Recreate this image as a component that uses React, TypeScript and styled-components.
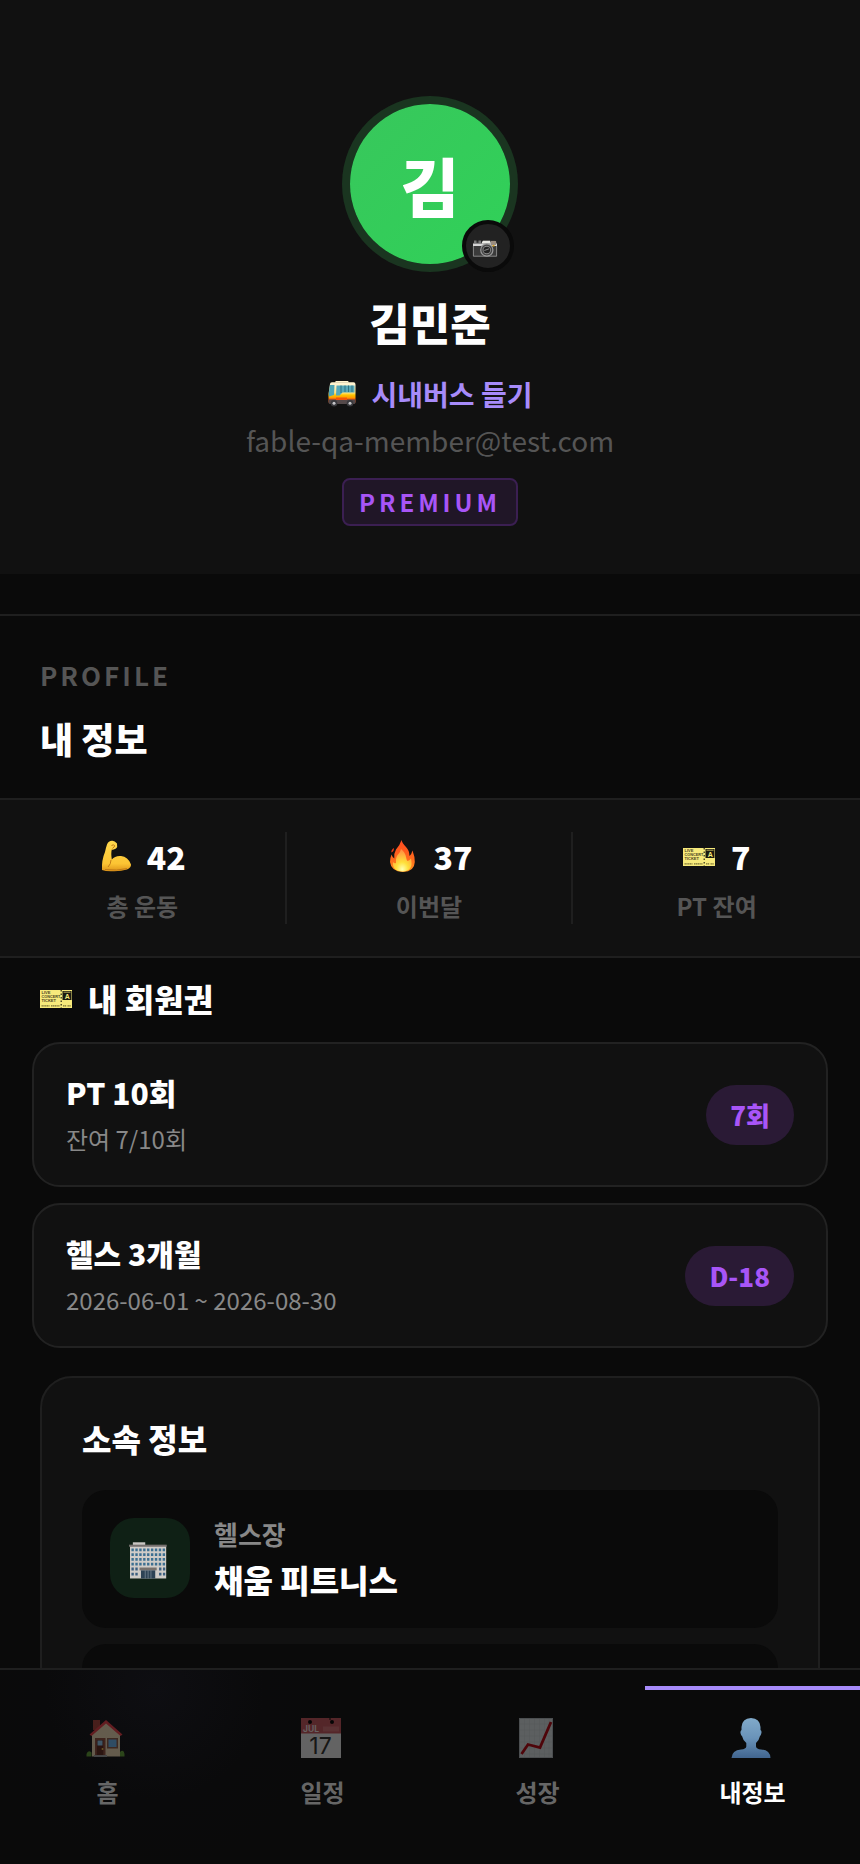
import React from 'react'
import styled, { createGlobalStyle } from 'styled-components'

const GlobalStyle = createGlobalStyle`
    *, *::before, *::after {
        box-sizing: border-box;
    }
    body {
        margin: 0;
        background: #0a0a0a;
        color: #fff;
        font-family: 'Noto Sans CJK KR', 'Noto Sans', sans-serif;
    }
    h1, h2, p, ul {
        margin: 0;
        padding: 0;
    }
    button {
        font-family: inherit;
        cursor: pointer;
    }
    svg {
        overflow: visible;
    }
`

const Screen = styled.div`
    display: flex;
    flex-direction: column;
    height: 100vh;
`

const Content = styled.main`
    flex: 1;
    min-height: 0;
    overflow-y: auto;
    scrollbar-width: none;
`

/* ---------- hero ---------- */

const Hero = styled.header`
    display: flex;
    flex-direction: column;
    align-items: center;
    padding: 104px 24px 48px;
    background: #111;
`

const Avatar = styled.div`
    position: relative;
    display: flex;
    align-items: center;
    justify-content: center;
    width: 160px;
    height: 160px;
    border-radius: 50%;
    background: linear-gradient(135deg, #38c75c, #30d158);
    box-shadow: 0 0 0 8px #1a3520;
    font-size: 64px;
    line-height: 92px;
    font-weight: 800;
`

const CameraButton = styled.button`
    position: absolute;
    right: -4px;
    bottom: -8px;
    display: flex;
    align-items: center;
    justify-content: center;
    width: 52px;
    height: 52px;
    padding: 0;
    border: 4px solid #0a0a0a;
    border-radius: 50%;
    background: #222;
`

const UserName = styled.h1`
    margin-top: 26px;
    font-size: 44px;
    line-height: 64px;
    font-weight: 800;
`

const UserTitle = styled.p`
    display: flex;
    align-items: center;
    gap: 16px;
    margin-top: 20px;
    color: #a78bfa;
    font-size: 28px;
    line-height: 40px;
    font-weight: 700;
`

const Email = styled.p`
    margin-top: 6px;
    color: #555;
    font-size: 28px;
    line-height: 40px;
`

const Plan = styled.span`
    margin-top: 18px;
    padding: 0 15px;
    border: 2px solid #3b1f52;
    border-radius: 8px;
    background: #201627;
    color: #a855f7;
    font-size: 24px;
    line-height: 44px;
    font-weight: 700;
    letter-spacing: 4px;
`

/* ---------- my info ---------- */

const PageHead = styled.div`
    margin-top: 40px;
    padding: 40px 40px 32px;
    border-top: 2px solid #1f1f1f;
`

const Eyebrow = styled.p`
    color: #555;
    font-size: 26px;
    line-height: 38px;
    font-weight: 700;
    letter-spacing: 3px;
`

const PageTitle = styled.h2`
    margin-top: 16px;
    font-size: 36px;
    line-height: 56px;
    font-weight: 800;
`

const Stats = styled.ul`
    display: grid;
    grid-template-columns: repeat(3, 1fr);
    padding: 32px 0;
    border: solid #1f1f1f;
    border-width: 2px 0;
    background: #111;
    list-style: none;
`

const Stat = styled.li`
    display: flex;
    flex-direction: column;
    align-items: center;
    gap: 8px;

    &:not(:last-child) {
        border-right: 2px solid #1f1f1f;
    }
`

const StatValue = styled.span`
    display: flex;
    align-items: center;
    gap: 16px;
    font-size: 32px;
    line-height: 48px;
    font-weight: 800;
`

const StatLabel = styled.span`
    color: #555;
    font-size: 24px;
    line-height: 36px;
    font-weight: 700;
`

/* ---------- memberships ---------- */

const SectionTitle = styled.h2`
    display: flex;
    align-items: center;
    gap: 16px;
    padding: 16px 40px 20px;
    font-size: 32px;
    line-height: 48px;
    font-weight: 800;
`

const Passes = styled.div`
    display: flex;
    flex-direction: column;
    gap: 16px;
    padding: 0 32px;
`

const PassCard = styled.article`
    display: flex;
    align-items: center;
    justify-content: space-between;
    padding: 28px 32px;
    border: 2px solid #222;
    border-radius: 28px;
    background: #111;
`

const PassText = styled.div`
    display: flex;
    flex-direction: column;
    gap: 9px;
`

const PassName = styled.strong`
    font-size: 30px;
    line-height: 40px;
    font-weight: 800;
`

const PassDetail = styled.span`
    color: #888;
    font-size: 24px;
    line-height: 36px;
`

const Pill = styled.span`
    padding: 12px 24px;
    border-radius: 30px;
    background: #2a1a35;
    color: #a855f7;
    font-size: 26px;
    line-height: 36px;
    font-weight: 800;
`

/* ---------- affiliation ---------- */

const GymCard = styled.section`
    display: flex;
    flex-direction: column;
    gap: 16px;
    margin: 28px 40px 40px;
    padding: 40px;
    border: 2px solid #1f1f1f;
    border-radius: 32px;
    background: #111;
`

const GymTitle = styled.h2`
    margin-bottom: 16px;
    font-size: 32px;
    line-height: 40px;
    font-weight: 800;
`

const GymRow = styled.div`
    display: flex;
    gap: 24px;
    padding: 28px;
    border-radius: 24px;
    background: #0a0a0a;
`

const GymIcon = styled.span`
    display: flex;
    align-items: center;
    justify-content: center;
    width: 80px;
    height: 80px;
    border-radius: 24px;
    background: #0f2015;
`

const GymText = styled.div`
    display: flex;
    flex-direction: column;
    gap: 8px;
`

const GymLabel = styled.span`
    color: #888;
    font-size: 26px;
    line-height: 32px;
    font-weight: 700;
`

const GymName = styled.strong`
    font-size: 32px;
    line-height: 42px;
    font-weight: 800;
`

/* ---------- bottom tabs ---------- */

const TabBar = styled.nav`
    display: grid;
    grid-template-columns: repeat(4, 1fr);
    padding: 16px 0 30px;
    border-top: 2px solid #1f1f1f;
    background: radial-gradient(circle at 18% 10%, #0e0e12 0, #0a0a0b 110px, #0a0a0a 180px);
`

const Tab = styled.button<{ $active: boolean }>`
    display: flex;
    flex-direction: column;
    align-items: center;
    gap: 16px;
    padding: 28px 0 24px;
    border: 0;
    border-top: 4px solid ${({ $active }) => ($active ? '#a78bfa' : 'transparent')};
    background: none;
    color: ${({ $active }) => ($active ? '#fff' : '#666')};
    font-size: 24px;
    line-height: 36px;
    font-weight: 700;

    svg {
        margin-right: 3px;
        opacity: ${({ $active }) => ($active ? 1 : 0.4)};
    }
`

/* ---------- drawings ---------- */

const CameraIcon = () => (
    <svg width="30" height="30" viewBox="2 -3 30 30" aria-hidden="true">
        <path d="M2 10 L3 7.5 H10 L11 8 L12 6.500 H24 L26 8 V22.500 H2 Z" fill="#3b3b3b" />
        <path d="M2 9.500 H26 V12 H2 Z" fill="#d5d5d5" />
        <path d="M11 8 L12 6.800 H19 L20 9.500 H11 Z" fill="#e9e9e4" />
        <rect x="3" y="6.500" width="2.500" height="2.500" fill="#777" />
        <rect x="7.500" y="6.500" width="2.500" height="2.500" fill="#777" />
        <rect x="20" y="7" width="5" height="4" fill="#9a8d80" />
        <path d="M2.400 12 V22.200 H25.600 V12" fill="none" stroke="#999" strokeWidth="0.8" />
        <circle cx="15.800" cy="16" r="6.700" fill="#999" />
        <circle cx="15.800" cy="16" r="5.500" fill="#444" />
        <circle cx="15.800" cy="16" r="4.200" fill="#8a8a8a" />
        <circle cx="15.800" cy="16" r="3.300" fill="#222" />
        <path d="M13.300 16.500 L18 14.800" stroke="#888" strokeWidth="1" />
        <rect x="21.500" y="11" width="2" height="1.500" fill="#d9a520" />
    </svg>
)

const BusIcon = () => (
    <svg width="28" height="28" viewBox="0 0 28 28" aria-hidden="true">
        <defs>
            <linearGradient id="bus" x1="0" y1="0" x2="0" y2="1">
                <stop offset="0.15" stopColor="#fff3cf" />
                <stop offset="0.5" stopColor="#ffe27a" />
                <stop offset="0.6" stopColor="#ffc400" />
                <stop offset="0.72" stopColor="#ff9d00" />
                <stop offset="0.8" stopColor="#f0560a" />
            </linearGradient>
        </defs>
        <path d="M7 2 L8 1 H20 L21 2.500 H7 Z" fill="#fff3cf" />
        <path d="M2 4 Q2 2.300 4 2.300 H25.500 Q27.500 2.300 27.500 4.500 V21.500 Q27.500 23.500 26 23.500 H2 Q0.500 23.500 0.500 21.500 V14 Z" fill="url(#bus)" />
        <path d="M2 5 H6.500 L6 15 L0.800 16.500 V13 Z" fill="#4fa6b5" />
        <path d="M8.500 5.500 H26.500 V12.500 H14.500 L11.500 15.500 H8 Z" fill="#57a8b8" />
        <path d="M13 5.500 V13 M17 5.500 V12 M20.500 5.500 V12 M24 5.500 V12" stroke="#2c7180" strokeWidth="1" />
        <path d="M0.500 19.500 H27.500 V22 Q27.500 24 26 24 H2 Q0.500 24 0.500 22 Z" fill="#54494a" />
        <path d="M8 17.500 H19 V20 H8 Z" fill="#f0560a" />
        <circle cx="6" cy="23.200" r="3.300" fill="#39393d" />
        <circle cx="6" cy="23.200" r="1.500" fill="#c6c6c9" />
        <circle cx="22" cy="23.200" r="3.300" fill="#39393d" />
        <circle cx="22" cy="23.200" r="1.500" fill="#c6c6c9" />
    </svg>
)

const ArmIcon = () => (
    <svg width="32" height="32" viewBox="0 0 32 32" aria-hidden="true">
        <defs>
            <linearGradient id="arm" x1="0" y1="0" x2="0" y2="1">
                <stop offset="0" stopColor="#ffd94d" />
                <stop offset="0.75" stopColor="#fcc433" />
                <stop offset="1" stopColor="#dd9318" />
            </linearGradient>
        </defs>
        <path
            d="M8 4.500 Q9.500 0.800 13 0.800 Q15.500 0.500 18 3.500 Q18.800 7 17 8.600 Q14.500 10.200 12.800 9.500 Q11.800 13 12.800 19.500 Q16 15.500 22 16 Q29 16.500 32 24.500 Q32.300 27.500 28 29.500 Q22 31.500 14 31.300 Q7 31.600 3 30 Q2.500 20 6 12 Q6.800 8 8 4.500 Z"
            fill="url(#arm)"
        />
        <path d="M12 20 Q12 24 9 27 M12.500 5.500 Q15 3.800 15.800 6 L13.500 8.500 M6 29.500 Q18 31 28 28.600" fill="none" stroke="#c17b17" strokeWidth="1" />
    </svg>
)

const FireIcon = () => (
    <svg width="32" height="32" viewBox="0 0 32 32" aria-hidden="true">
        <defs>
            <linearGradient id="fire" x1="0" y1="0" x2="0" y2="1">
                <stop offset="0" stopColor="#ff4a20" />
                <stop offset="0.6" stopColor="#ff6a1c" />
                <stop offset="1" stopColor="#ff9320" />
            </linearGradient>
            <radialGradient id="flame" cx="0.5" cy="0.9" r="0.8">
                <stop offset="0" stopColor="#ffffb0" />
                <stop offset="0.4" stopColor="#ffe03a" />
                <stop offset="1" stopColor="#ff9640" />
            </radialGradient>
        </defs>
        <path
            d="M15.500 0 Q16 3 20 7 Q23.500 10.500 23.500 16 Q25.500 14.500 26.500 10.500 Q29 17 28.800 22 Q28.500 31.500 17 32 Q5 31.500 4 22 Q4 18 5.500 14.500 Q6.500 17.500 8.300 18.500 Q7.500 14 10 9.500 Q14 5 15.500 0 Z"
            fill="url(#fire)"
        />
        <path
            d="M15 9 Q19 12 20 17 Q20.500 20 21.500 21 Q23.500 20.500 25 18.500 Q28 31 16.500 31.500 Q6 31 7 22 Q8.500 24 10 23 Q9.500 17 12 14.500 Q14.500 12 15 9 Z"
            fill="url(#flame)"
        />
        <path d="M8 8 Q4.800 10 5.500 12.500 Q8 11.500 8 8 Z" fill="#ed3c18" />
    </svg>
)

const TicketIcon = () => (
    <svg width="32" height="32" viewBox="0 0 32 32" aria-hidden="true">
        <rect y="8" width="32" height="18" fill="#f7ea7b" />
        <rect x="22.500" y="9" width="9" height="9" fill="#1b1a10" />
        <path d="M21.200 8 V26" stroke="#2a2814" strokeWidth="1.200" strokeDasharray="1.500 2" />
        <g fill="#4a4622" fontFamily="Liberation Sans, sans-serif" fontWeight="700" fontSize="4">
            <text x="1.500" y="12">LIVE</text>
            <text x="1.500" y="16" fontSize="3.800">CONCERT</text>
            <text x="1.500" y="20.300">TICKET</text>
            <text x="24.800" y="17.300" fill="#f7ea7b" fontSize="7">A</text>
        </g>
        <path d="M23.500 10.200 H30.500" stroke="#b5ab59" strokeWidth="1" />
        <path d="M1.500 23.800 H9.500 M11 23.800 H19.500 M23 23.800 H26.500 M27.500 23.800 H31" stroke="#777032" strokeWidth="1.200" strokeDasharray="1.400 0.400" />
    </svg>
)

const OfficeIcon = () => (
    <svg width="40" height="40" viewBox="2 -2 42 42" aria-hidden="true">
        <rect x="5" y="2.500" width="13" height="3" fill="#c9c6c3" />
        <rect x="2" y="5.500" width="38" height="35" fill="#cfccc8" />
        <rect x="1" y="5" width="39.500" height="2.200" fill="#75706e" />
        {[9, 14, 19, 24].map(y => (
            <path key={y} d={`M3.500 ${y + 1.500} H39`} stroke="#3c6f91" strokeWidth="3" strokeDasharray="2.500 1.600" />
        ))}
        {[29, 34.500].map(y => (
            <path key={y} d={`M3.500 ${y + 1.500} H10.500 M32.500 ${y + 1.500} H39`} stroke="#3c5f80" strokeWidth="3" strokeDasharray="2.500 1.600" />
        ))}
        <rect x="12" y="29" width="18" height="3" fill="#77716d" />
        <rect x="13.500" y="32" width="15" height="8.500" fill="#2d4355" />
        <path d="M18 32 V40.500 M21 32 V40.500 M24 32 V40.500" stroke="#8796a0" strokeWidth="0.7" />
    </svg>
)

const HomeIcon = () => (
    <svg width="40" height="40" viewBox="0 0 40 40" aria-hidden="true">
        <rect x="7" y="2" width="7" height="10" fill="#a33c32" />
        <path d="M6 17 L20 4 L34 17 V38.500 H6 Z" fill="#e9d3ad" />
        <path d="M3.500 16.500 L20 2 L36.500 16.500 L34.500 18 L20 5.500 L5.500 18 Z" fill="#e5383e" />
        <rect x="9" y="20" width="10.500" height="18.500" fill="#8c4a37" />
        <rect x="10.800" y="22" width="6.500" height="15" fill="#5a2216" />
        <rect x="11.500" y="22.500" width="5" height="5" fill="#8cc4ea" />
        <circle cx="16.500" cy="31" r="1" fill="#f3c548" />
        <rect x="21" y="20" width="11" height="10.500" fill="#875641" />
        <rect x="22.500" y="21.500" width="8" height="7.500" fill="#65aee6" />
        <rect x="8" y="37" width="13" height="2" fill="#999" />
        <path d="M0.500 38.500 V36 Q2 31.500 5.500 34.500 V38.500 Z M34 38.500 V34 Q37.500 30.500 38.500 36 V38.500 Z" fill="#5c9a2e" />
    </svg>
)

const CalendarIcon = () => (
    <svg width="40" height="40" viewBox="0 0 40 40" aria-hidden="true">
        <rect width="40" height="40" fill="#e9e9e9" />
        <rect width="40" height="15.500" fill="#c45258" />
        <circle cx="9" cy="4" r="2" fill="#000" />
        <circle cx="31" cy="4" r="2" fill="#000" />
        <path d="M29 0 V2" stroke="#000" />
        <path d="M22.500 11 H38" stroke="#e0858a" strokeWidth="5" strokeDasharray="1 1" />
        <text x="2" y="14" fill="#f4e8e8" fontFamily="Inter, sans-serif" fontSize="8.500" fontWeight="600">JUL</text>
        <text x="19.500" y="36" fill="#2c2c2c" fontFamily="Inter, sans-serif" fontSize="23" fontWeight="400" textAnchor="middle">17</text>
    </svg>
)

const ChartIcon = () => (
    <svg width="40" height="40" viewBox="0 0 40 40" aria-hidden="true">
        <rect x="3.500" y="0.500" width="33" height="39" fill="#d8dee2" stroke="#aeb4b8" />
        <path
            d="M8.500 1 V39 M13.500 1 V39 M18.500 1 V39 M23.500 1 V39 M28.500 1 V39 M33 1 V39 M4 6 H36 M4 12 H36 M4 18 H36 M4 24 H36 M4 30 H36 M4 36 H36"
            stroke="#c6ccd1"
            strokeWidth="0.6"
        />
        <path d="M5.500 36 L12 26.500 L24 29.500 L35 4" fill="none" stroke="#b5000c" strokeWidth="2.800" />
    </svg>
)

const PersonIcon = () => (
    <svg width="40" height="40" viewBox="0 0 40 40" aria-hidden="true">
        <defs>
            <linearGradient id="person" x1="0" y1="0" x2="0" y2="1">
                <stop offset="0" stopColor="#81aaca" />
                <stop offset="0.5" stopColor="#6a93b9" />
                <stop offset="1" stopColor="#41658f" />
            </linearGradient>
        </defs>
        <path
            d="M20 0 Q29 0.500 29.500 9 V12 Q31 13 30.300 15.500 Q29.800 17.500 29 18 Q28 22.500 25 25 V28.500 Q25.500 31 30 31.500 Q39 32 39.500 40 H0.500 Q1 32 10 31.500 Q15 31 15.300 28.500 V25 Q12 22.500 11 18 Q10 17.500 9.600 15.500 Q9 13 10.500 12 V9 Q11 0.500 20 0 Z"
            fill="url(#person)"
        />
    </svg>
)

const stats = [
    { icon: <ArmIcon />, value: '42', label: '총 운동' },
    { icon: <FireIcon />, value: '37', label: '이번달' },
    { icon: <TicketIcon />, value: '7', label: 'PT 잔여' },
]

const passes = [
    { name: 'PT 10회', detail: '잔여 7/10회', left: '7회' },
    { name: '헬스 3개월', detail: '2026-06-01 ~ 2026-08-30', left: 'D-18' },
]

const tabs = [
    { icon: <HomeIcon />, label: '홈' },
    { icon: <CalendarIcon />, label: '일정' },
    { icon: <ChartIcon />, label: '성장' },
    { icon: <PersonIcon />, label: '내정보' },
]

const App: React.FC = () => {
    const [current, setCurrent] = React.useState('내정보')

    return (
        <Screen>
            <GlobalStyle />
            <Content>
                <Hero>
                    <Avatar>
                        김
                        <CameraButton type="button" aria-label="프로필 사진 변경">
                            <CameraIcon />
                        </CameraButton>
                    </Avatar>
                    <UserName>김민준</UserName>
                    <UserTitle><BusIcon />시내버스 들기</UserTitle>
                    <Email>fable-qa-member@test.com</Email>
                    <Plan>PREMIUM</Plan>
                </Hero>

                <PageHead>
                    <Eyebrow>PROFILE</Eyebrow>
                    <PageTitle>내 정보</PageTitle>
                </PageHead>

                <Stats>
                    {stats.map(({ icon, value, label }) => (
                        <Stat key={label}>
                            <StatValue>{icon}{value}</StatValue>
                            <StatLabel>{label}</StatLabel>
                        </Stat>
                    ))}
                </Stats>

                <SectionTitle><TicketIcon />내 회원권</SectionTitle>
                <Passes>
                    {passes.map(({ name, detail, left }) => (
                        <PassCard key={name}>
                            <PassText>
                                <PassName>{name}</PassName>
                                <PassDetail>{detail}</PassDetail>
                            </PassText>
                            <Pill>{left}</Pill>
                        </PassCard>
                    ))}
                </Passes>

                <GymCard>
                    <GymTitle>소속 정보</GymTitle>
                    <GymRow>
                        <GymIcon><OfficeIcon /></GymIcon>
                        <GymText>
                            <GymLabel>헬스장</GymLabel>
                            <GymName>채움 피트니스</GymName>
                        </GymText>
                    </GymRow>
                    <GymRow />
                </GymCard>
            </Content>

            <TabBar>
                {tabs.map(({ icon, label }) => (
                    <Tab
                        key={label}
                        type="button"
                        $active={label === current}
                        aria-current={label === current ? 'page' : undefined}
                        onClick={() => setCurrent(label)}
                    >
                        {icon}
                        {label}
                    </Tab>
                ))}
            </TabBar>
        </Screen>
    )
}

export default App
